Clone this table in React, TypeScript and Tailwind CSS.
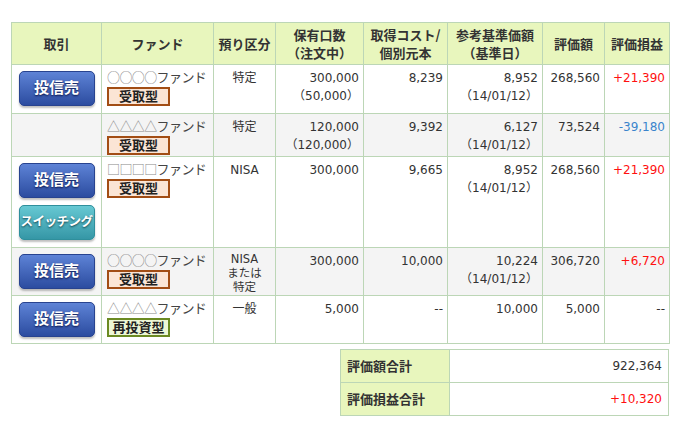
import React from "react";

type Row = {
  sell: boolean;
  switching?: boolean;
  mark: string;
  badge: "receive" | "reinvest";
  account: React.ReactNode;
  units: string;
  pending?: string;
  cost: string;
  nav: string;
  navDate?: string;
  value: string;
  pl: string;
  plColor: string;
  shaded: boolean;
  height: string;
};

const rows: Row[] = [
  { sell: true, mark: "○○○○", badge: "receive", account: "特定", units: "300,000", pending: "（50,000）", cost: "8,239", nav: "8,952", navDate: "（14/01/12）", value: "268,560", pl: "+21,390", plColor: "text-[#ff1010]", shaded: false, height: "h-[49px]" },
  { sell: false, mark: "△△△△", badge: "receive", account: "特定", units: "120,000", pending: "（120,000）", cost: "9,392", nav: "6,127", navDate: "（14/01/12）", value: "73,524", pl: "-39,180", plColor: "text-[#3b84cc]", shaded: true, height: "h-[43px]" },
  { sell: true, switching: true, mark: "□□□□", badge: "receive", account: "NISA", units: "300,000", cost: "9,665", nav: "8,952", navDate: "（14/01/12）", value: "268,560", pl: "+21,390", plColor: "text-[#ff1010]", shaded: false, height: "h-[91px]" },
  {
    sell: true,
    mark: "○○○○",
    badge: "receive",
    account: (
      <div className="text-[11.5px] leading-[14px]">
        <div>NISA</div>
        <div>または</div>
        <div>特定</div>
      </div>
    ),
    units: "300,000",
    cost: "10,000",
    nav: "10,224",
    navDate: "（14/01/12）",
    value: "306,720",
    pl: "+6,720",
    plColor: "text-[#ff1010]",
    shaded: true,
    height: "h-[48px]",
  },
  { sell: true, mark: "△△△△", badge: "reinvest", account: "一般", units: "5,000", cost: "--", nav: "10,000", value: "5,000", pl: "--", plColor: "text-[#333]", shaded: false, height: "h-[48px]" },
];

const cjk = "font-['Noto_Sans_CJK_JP',sans-serif]";

function SellButton({ label, teal }: { label: string; teal?: boolean }) {
  return (
    <div
      className={
        teal
          ? "mx-auto flex h-[35px] w-[76px] items-center justify-center rounded-[5px] border border-[#2f8f9c] bg-gradient-to-b from-[#66c8d3] to-[#3597a6] text-[12.5px] font-bold tracking-[-0.5px] text-white shadow-[0_2px_2px_rgba(0,0,0,0.25)] [text-shadow:0_1px_2px_rgba(0,40,50,0.8)]"
          : "mx-auto flex h-[35px] w-[76px] items-center justify-center rounded-[5px] border border-[#28438f] bg-gradient-to-b from-[#5e83d6] to-[#2c4ca0] text-[15px] font-bold text-white shadow-[0_2px_2px_rgba(0,0,0,0.25)] [text-shadow:0_1px_2px_rgba(0,10,60,0.9)]"
      }
    >
      {label}
    </div>
  );
}

function Badge({ kind }: { kind: "receive" | "reinvest" }) {
  return kind === "receive" ? (
    <div className="flex h-[19px] w-[63px] items-center justify-center border-2 border-[#a24d14] bg-[#fbe5d5] text-[13px] font-bold leading-none text-[#222]">
      受取型
    </div>
  ) : (
    <div className="flex h-[19px] w-[63px] items-center justify-center border-2 border-[#6b8a22] bg-[#eef7d6] text-[13px] font-bold leading-none text-[#222]">
      再投資型
    </div>
  );
}

export default function App() {
  const th = "border border-[#bcd6b6] bg-[#e8f6bd] text-center align-middle text-[13px] font-bold leading-[18px] text-[#333]";
  const td = "border border-[#bcd6b6] align-top";
  const num = "px-[4px] pt-[4px] text-right text-[12px] leading-[18px]";

  return (
    <div className={`min-h-[436px] w-[680px] bg-white pl-[11px] pt-[22px] font-['DejaVu_Sans','Noto_Sans_CJK_JP',sans-serif]`}>
      <table className="w-[658px] table-fixed border-collapse">
        <colgroup>
          <col className="w-[90px]" />
          <col className="w-[112px]" />
          <col className="w-[62px]" />
          <col className="w-[88px]" />
          <col className="w-[84px]" />
          <col className="w-[95px]" />
          <col className="w-[62px]" />
          <col className="w-[65px]" />
        </colgroup>
        <thead>
          <tr className="h-[42px]">
            <th className={`${th} ${cjk}`}>取引</th>
            <th className={`${th} ${cjk}`}>ファンド</th>
            <th className={`${th} ${cjk}`}>預り区分</th>
            <th className={`${th} ${cjk}`}>
              保有口数
              <br />
              （注文中）
            </th>
            <th className={`${th} ${cjk}`}>
              取得コスト/
              <br />
              個別元本
            </th>
            <th className={`${th} ${cjk}`}>
              参考基準価額
              <br />
              （基準日）
            </th>
            <th className={`${th} ${cjk}`}>評価額</th>
            <th className={`${th} ${cjk}`}>評価損益</th>
          </tr>
        </thead>
        <tbody>
          {rows.map((r, i) => (
            <tr key={i} className={`${r.height} ${r.shaded ? "bg-[#f4f4f4]" : "bg-white"}`}>
              <td className={`${td} px-[6px] pt-[6px]`}>
                {r.sell && <SellButton label="投信売" />}
                {r.switching && (
                  <div className="mt-[7px]">
                    <SellButton label="スイッチング" teal />
                  </div>
                )}
              </td>
              <td className={`${td} pl-[5px] pt-[3px]`}>
                <div className={`${cjk} text-[13px] leading-[18px] tracking-[-0.6px]`}>
                  <span className="text-[#888]">{r.mark}</span>
                  <span className="text-[#444]">ファンド</span>
                </div>
                <div className="mt-[1px]">
                  <Badge kind={r.badge} />
                </div>
              </td>
              <td className={`${td} pt-[4px] text-center text-[12px] leading-[18px] text-[#333]`}>
                {r.account}
              </td>
              <td className={`${td} ${num} text-[#333]`}>
                <div>{r.units}</div>
                {r.pending && <div>{r.pending}</div>}
              </td>
              <td className={`${td} ${num} text-[#333]`}>{r.cost}</td>
              <td className={`${td} ${num} text-[#333]`}>
                <div>{r.nav}</div>
                {r.navDate && <div>{r.navDate}</div>}
              </td>
              <td className={`${td} ${num} text-[#333]`}>{r.value}</td>
              <td className={`${td} ${num} ${r.plColor}`}>{r.pl}</td>
            </tr>
          ))}
        </tbody>
      </table>

      <table className="ml-[329px] mt-[5px] w-[329px] table-fixed border-collapse">
        <colgroup>
          <col className="w-[109px]" />
          <col />
        </colgroup>
        <tbody>
          <tr className="h-[33px]">
            <td className={`border border-[#bcd6b6] bg-[#e8f6bd] pl-[6px] align-middle text-[13px] font-bold text-[#333] ${cjk}`}>
              評価額合計
            </td>
            <td className="border border-[#bcd6b6] bg-white pr-[6px] text-right align-middle text-[12px] text-[#333]">
              922,364
            </td>
          </tr>
          <tr className="h-[33px]">
            <td className={`border border-[#bcd6b6] bg-[#e8f6bd] pl-[6px] align-middle text-[13px] font-bold text-[#333] ${cjk}`}>
              評価損益合計
            </td>
            <td className="border border-[#bcd6b6] bg-white pr-[6px] text-right align-middle text-[12px] text-[#ff1010]">
              +10,320
            </td>
          </tr>
        </tbody>
      </table>
    </div>
  );
}
